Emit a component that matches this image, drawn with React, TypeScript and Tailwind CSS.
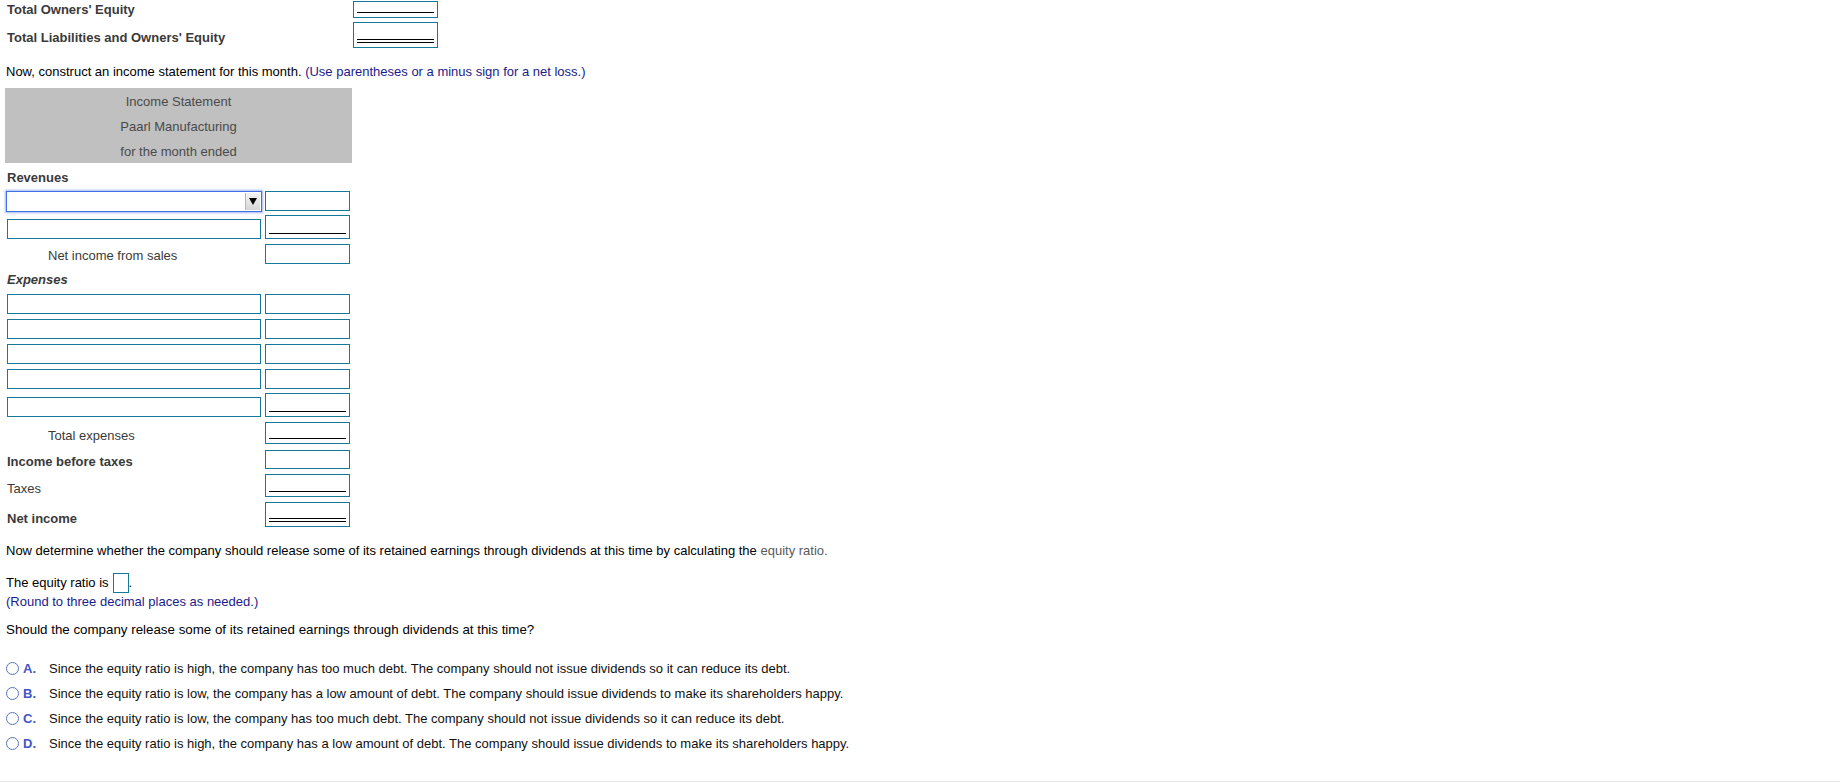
import React from 'react'

const box = 'border border-[#16799a] bg-white'

function AmountBox({ h, line }: { h: string; line?: 'single' | 'double' }) {
  return (
    <div className={`${box} ${h} w-[85px] shrink-0 flex flex-col justify-end px-[3px] pb-[4px]`}>
      {line === 'single' && <div className="h-px bg-black" />}
      {line === 'double' && (
        <div className="flex flex-col gap-[2px]">
          <div className="h-px bg-black" />
          <div className="h-px bg-black" />
        </div>
      )}
    </div>
  )
}

function TextBox() {
  return <div className={`${box} h-[20px] w-[254px] shrink-0`} />
}

function SelectBox() {
  return (
    <div className="h-[21px] w-[256px] shrink-0 ml-[-1px] border border-[#3f6fe0] shadow-[0_0_2px_1px_#9db8f5] bg-white flex justify-end items-stretch p-px">
      <div className="w-[15px] bg-gradient-to-b from-[#f4f4f4] to-[#d6d6d6] border-l border-[#b8b8b8] flex items-center justify-center">
        <div className="w-0 h-0 border-l-[4px] border-r-[4px] border-t-[7px] border-l-transparent border-r-transparent border-t-black" />
      </div>
    </div>
  )
}

const options = [
  ['A.', 'Since the equity ratio is high, the company has too much debt. The company should not issue dividends so it can reduce its debt.'],
  ['B.', 'Since the equity ratio is low, the company has a low amount of debt. The company should issue dividends to make its shareholders happy.'],
  ['C.', 'Since the equity ratio is low, the company has too much debt. The company should not issue dividends so it can reduce its debt.'],
  ['D.', 'Since the equity ratio is high, the company has a low amount of debt. The company should issue dividends to make its shareholders happy.'],
]

export default function App() {
  return (
    <div className="w-[1840px] h-[782px] bg-white overflow-hidden relative font-['Liberation_Sans',Arial,sans-serif] text-[13px] text-black">
      {/* balance sheet tail */}
      <div className="flex items-center h-[19px]">
        <div className="w-[353px] pl-[7px] font-bold text-[#3a3a3a]">Total Owners' Equity</div>
        <AmountBox h="h-[17px]" line="single" />
      </div>
      <div className="flex items-center h-[26px] mt-[3px]">
        <div className="w-[353px] pl-[7px] pt-[6px] font-bold text-[#3a3a3a]">Total Liabilities and Owners' Equity</div>
        <AmountBox h="h-[26px]" line="double" />
      </div>

      <p className="mt-[16px] pl-[6px] h-[16px] leading-[16px]">
        Now, construct an income statement for this month.{' '}
        <span className="text-[#1b1b8a]">(Use parentheses or a minus sign for a net loss.)</span>
      </p>

      {/* income statement */}
      <div className="mt-[8px] ml-[5px] w-[347px] h-[75px] bg-[#c0c0c0] text-[#4a4a4a] text-center pt-[1px]">
        <div className="h-[25px] leading-[25px]">Income Statement</div>
        <div className="h-[25px] leading-[25px]">Paarl Manufacturing</div>
        <div className="h-[25px] leading-[25px]">for the month ended</div>
      </div>

      <div className="pl-[7px] w-[350px] text-[#3a3a3a]">
        <div className="mt-[3px] h-[24px] flex items-center font-bold">Revenues</div>
        <div className="mt-[1px] h-[21px] flex items-start gap-[3px]">
          <SelectBox />
          <AmountBox h="h-[20px]" />
        </div>
        <div className="mt-[3px] h-[24px] flex items-end gap-[4px]">
          <TextBox />
          <AmountBox h="h-[24px]" line="single" />
        </div>
        <div className="mt-[5px] h-[20px] flex items-center">
          <div className="w-[258px] pl-[41px] pt-[3px]">Net income from sales</div>
          <AmountBox h="h-[20px]" />
        </div>
        <div className="mt-[4px] h-[24px] flex items-center font-bold italic">Expenses</div>
        {[0, 1, 2, 3].map((i) => (
          <div key={i} className={`${i === 0 ? 'mt-[2px]' : 'mt-[5px]'} h-[20px] flex items-end gap-[4px]`}>
            <TextBox />
            <AmountBox h="h-[20px]" />
          </div>
        ))}
        <div className="mt-[4px] h-[24px] flex items-end gap-[4px]">
          <TextBox />
          <AmountBox h="h-[24px]" line="single" />
        </div>
        <div className="mt-[5px] h-[22px] flex items-center">
          <div className="w-[258px] pl-[41px] pt-[6px]">Total expenses</div>
          <AmountBox h="h-[22px]" line="single" />
        </div>
        <div className="mt-[6px] h-[19px] flex items-center">
          <div className="w-[258px] pt-[5px] font-bold">Income before taxes</div>
          <AmountBox h="h-[19px]" />
        </div>
        <div className="mt-[5px] h-[23px] flex items-center">
          <div className="w-[258px] pt-[7px]">Taxes</div>
          <AmountBox h="h-[23px]" line="single" />
        </div>
        <div className="mt-[5px] h-[25px] flex items-center">
          <div className="w-[258px] pt-[9px] font-bold">Net income</div>
          <AmountBox h="h-[25px]" line="double" />
        </div>
      </div>

      {/* equity ratio */}
      <div className="pl-[6px]">
        <p className="mt-[16px] h-[16px] leading-[16px]">
          Now determine whether the company should release some of its retained earnings through dividends at this time by calculating the{' '}
          <span className="text-[#5a5a5a]">equity ratio.</span>
        </p>
        <div className="mt-[14px] h-[20px] flex items-center">
          <span>The equity ratio is</span>
          <span className={`${box} inline-block w-[16px] h-[20px] ml-[4px]`} />
          <span>.</span>
        </div>
        <p className="mt-[1px] h-[16px] leading-[16px] text-[#1b1b8a]">(Round to three decimal places as needed.)</p>
        <p className="mt-[12px] h-[16px] leading-[16px] text-[13.33px]">Should the company release some of its retained earnings through dividends at this time?</p>

        <div className="mt-[18px]">
          {options.map(([letter, text]) => (
            <div key={letter} className="h-[25px] flex items-center">
              <span className="w-[13px] h-[13px] rounded-full border border-[#5776bd] shrink-0" />
              <span className="ml-[4px] w-[26px] font-bold text-[#4256c8]">{letter}</span>
              <span className="text-[#111]">{text}</span>
            </div>
          ))}
        </div>
      </div>

      <div className="absolute left-0 right-0 bottom-0 h-px bg-[#ebebeb]" />
    </div>
  )
}
